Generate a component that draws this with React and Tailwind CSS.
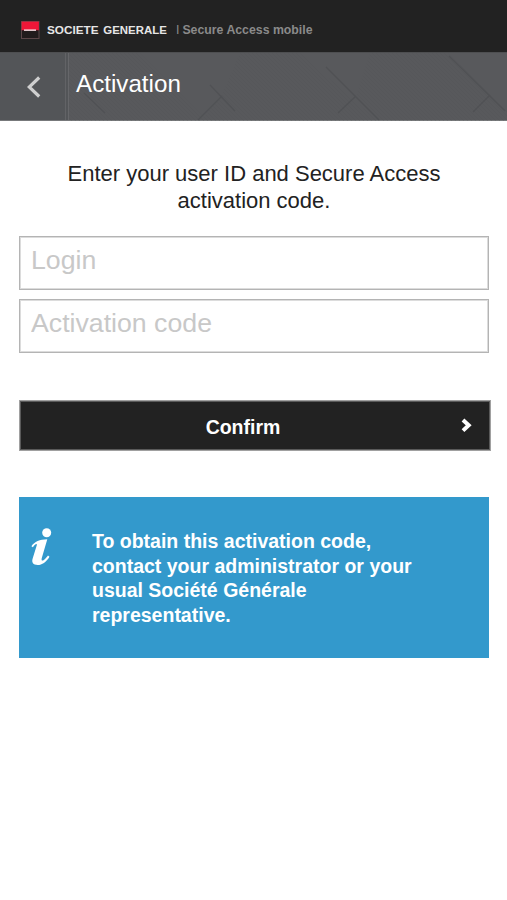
import { useState } from "react";

function Logo() {
  return (
    <svg width="148" height="20" viewBox="0 0 148 20" className="block shrink-0">
      <rect x="0.5" y="1.5" width="17.5" height="17" fill="#211b1c" stroke="#5c4649" />
      <rect x="0.6" y="1.6" width="17.3" height="8.6" fill="#ee1738" />
      <rect x="3" y="9.4" width="12" height="1.5" fill="#efd9dc" />
      <g fill="#e6e6e6" fontSize="10" fontWeight="700" fontFamily="'Liberation Sans', Arial, sans-serif">
        <text x="26" y="13.7" textLength="51.5" lengthAdjust="spacingAndGlyphs">SOCIETE</text>
        <text x="82.3" y="13.7" textLength="63.5" lengthAdjust="spacingAndGlyphs">GENERALE</text>
      </g>
    </svg>
  );
}

function BarPattern() {
  return (
    <svg width="507" height="68" viewBox="0 0 507 68" className="absolute inset-0" fill="none">
      <defs>
        <pattern id="weave" width="4" height="4" patternUnits="userSpaceOnUse">
          <path d="M0 0L4 4" stroke="#4c4e51" strokeWidth="0.6" opacity="0.35" />
        </pattern>
      </defs>
      <path d="M68 0H140L208 68H68ZM240 0H300L378 68H200L221 44ZM370 0H448L507 58V68H380L356 43Z" fill="url(#weave)" />
      <g stroke="#4b4d50" strokeWidth="1.2" opacity="0.6">
        <path d="M84 40L105 60M210 32L235 58M222 43L198 67" />
        <path d="M326 14L379 67M356 43L338 60" />
        <path d="M449 3L505 58M490 42L473 59" />
      </g>
    </svg>
  );
}

function InfoIcon() {
  return (
    <svg width="22" height="38" viewBox="0 0 22 38" fill="#fff" className="block">
      <circle cx="15.7" cy="4.8" r="4.5" />
      <path d="M0.4 18.2C3.6 13.8 8.6 11.4 16.3 11.3L10.8 30C10.2 32.3 11 33.2 12.5 32.2C14.2 31.1 15.8 29.5 17 27.6L18.5 28.7C15.2 34.2 11 37 6.7 37C2.1 37 0.5 34.4 1.6 30.8L5.7 17.5C6.4 15 4.5 15.3 1.9 19.2Z" />
    </svg>
  );
}

function App() {
  const [login, setLogin] = useState("");
  const [code, setCode] = useState("");

  return (
    <div className="min-h-[900px] w-full bg-white font-['Liberation_Sans',Arial,sans-serif]">
      <header className="flex h-[52px] items-start bg-[#222222] pt-5 pl-[21px]">
        <Logo />
        <p className="ml-[7px] text-[12.3px] leading-5 font-bold whitespace-nowrap text-[#8a8a8a]">
          <span className="mr-[3px] font-normal">I</span>Secure Access mobile
        </p>
      </header>

      <div className="relative flex h-[69px] border-t border-b border-t-[#4e4f51] border-b-[#77797b] bg-[#58595c]">
        <BarPattern />
        <button type="button" aria-label="Back" className="relative w-[69px] border-r border-[#66676a] bg-[#535558]">
          <svg width="14" height="22" viewBox="0 0 14 22" fill="none" className="ml-[27px]">
            <path d="M12.2 1.5L2.2 11L12.2 20.5" stroke="#cfcfcf" strokeWidth="3.2" />
          </svg>
          <span className="absolute top-0 right-[2px] h-full w-px bg-[#626366]" />
        </button>
        <h1 className="relative pl-[7px] text-[24.2px] leading-[62px] text-white">Activation</h1>
      </div>

      <main className="pr-[18px] pl-[19px]">
        <p className="pt-[39px] text-center text-[22px] leading-[27px] text-[#222222]">
          Enter your user ID and Secure Access<br />activation code.
        </p>

        <form onSubmit={(e) => e.preventDefault()}>
          <input type="text" value={login} onChange={(e) => setLogin(e.target.value)} placeholder="Login" className="mt-[22px] block h-[54px] w-full border border-[#b4b4b4] px-[11px] pb-[6px] text-[26.7px] shadow-[inset_0_0_0_1px_#dcdcdc] outline-none placeholder:text-[#c8c8c8]" />
          <input type="text" value={code} onChange={(e) => setCode(e.target.value)} placeholder="Activation code" className="mt-[9px] block h-[54px] w-full border border-[#b4b4b4] px-[11px] pb-[5px] text-[26.7px] shadow-[inset_0_0_0_1px_#dcdcdc] outline-none placeholder:text-[#c8c8c8]" />
          <button type="submit" className="mt-[47px] flex h-[51px] w-[472px] items-center border border-[#a0a0a0] bg-[#222222] pr-[17px] text-[19.5px] font-bold text-white shadow-[inset_0_0_0_1px_#5a5a5a]">
            <span className="flex-1 pt-[4px] pl-[5px] text-center">Confirm</span>
            <svg width="12" height="15" viewBox="0 0 12 15" fill="none">
              <path d="M2 2L7.7 7.3L2 12.6" stroke="#fff" strokeWidth="4" />
            </svg>
          </button>
        </form>

        <section className="mt-[46px] flex h-[161px] bg-[#3399cc] pt-[31px] pl-3 text-white">
          <InfoIcon />
          <p className="ml-[39px] pt-px text-[19.5px] leading-[24.5px] font-bold">
            To obtain this activation code,<br />
            contact your administrator or your<br />
            usual Société Générale<br />
            representative.
          </p>
        </section>
      </main>
    </div>
  );
}

export default App;
